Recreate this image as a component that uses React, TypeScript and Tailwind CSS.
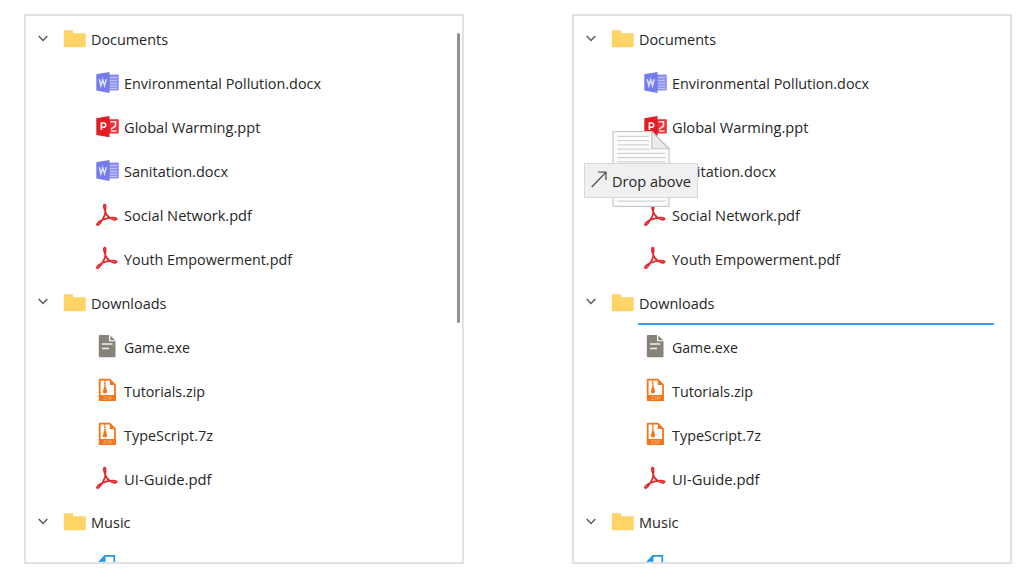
import type { ReactNode } from "react";

type Kind = "folder" | "word" | "ppt" | "pdf" | "exe" | "zip" | "music";
type Item = { label: string; kind: Kind; width: number };

const items: Item[] = [
  { label: "Documents", kind: "folder", width: 77 },
  { label: "Environmental Pollution.docx", kind: "word", width: 197 },
  { label: "Global Warming.ppt", kind: "ppt", width: 136.5 },
  { label: "Sanitation.docx", kind: "word", width: 104 },
  { label: "Social Network.pdf", kind: "pdf", width: 128 },
  { label: "Youth Empowerment.pdf", kind: "pdf", width: 168 },
  { label: "Downloads", kind: "folder", width: 75.5 },
  { label: "Game.exe", kind: "exe", width: 66 },
  { label: "Tutorials.zip", kind: "zip", width: 81 },
  { label: "TypeScript.7z", kind: "zip", width: 89 },
  { label: "UI-Guide.pdf", kind: "pdf", width: 87.5 },
  { label: "Music", kind: "folder", width: 39.5 },
  { label: "", kind: "music", width: 0 },
];

const glyphs: Record<Kind, ReactNode> = {
  folder: <path d="M.8 3.2q0-1 1-1h7.4q1 0 1 1v2h11.6q1 0 1 1v12q0 1-1 1h-20q-1 0-1-1z" fill="#ffd466" />,
  word: (
    <>
      <path d="M12 2.6h10q.8 0 .8.8v14.2q0 .8-.8.8H12z" fill="#8b92f0" />
      <path d="M14 5.6h7M14 8.4h7M14 11.2h7M14 14h7M14 16.4h7" stroke="#c5c9fa" strokeWidth="1" />
      <path d="M.3 2.3 13.5 0v21L.3 18.6z" fill="#747bea" />
      <path d="m3.3 7.2 1.6 6.4 1.8-5.8 1.8 5.8 1.7-6.4" fill="none" stroke="#e0e3ff" strokeWidth="1.5" />
    </>
  ),
  ppt: (
    <>
      <path d="M12 3.2h10q.8 0 .8.8v12.8q0 .8-.8.8H12z" fill="#ed3035" />
      <path d="M14.500 5.800h5v4.200l-4.500 3.200M15 15h5.500" fill="none" stroke="#ffe4e4" strokeWidth="1.6" />
      <path d="M.3 2.3 13.5 0v21.3L.3 18.9z" fill="#e31b23" />
      <path d="M5.4 14V7h2.2a2.1 2.1 0 0 1 0 4.3H5.4" fill="none" stroke="#fff" strokeWidth="1.6" />
    </>
  ),
  pdf: (
    <path
      d="M8.7.5C7.1.7 7.8 4 9.1 7.2c.5 1.3.2 2.2-.6 4.2-.8 1.8-1.5 3.4-2.3 4.6C3.6 17.4.6 19.5.9 20.7c1.1 1.5 3.2-1.1 5.3-4.7 2.7-1.2 5.1-1.9 7.7-2.1 2.5 1.6 5.9 2.8 6.7 1.3.6-1.7-3.7-1.6-6.7-1.3-2.4-1.6-4.1-3.7-4.8-6.7C9.8 3.9 10.1.5 8.7.5Z"
      fill="none" stroke="#e3292d" strokeWidth="1.7" strokeLinejoin="round"
    />
  ),
  exe: (
    <>
      <path d="M4 0h9v6.2h6.5V21q0 1.2-1.2 1.2H4q-1.2 0-1.2-1.2V1.2Q2.800 0 4 0Z" fill="#87837a" />
      <path d="m14.3.4 4.9 4.8h-4.9z" fill="#87837a" />
      <path d="M6 9h10.500M6 13.500h7" stroke="#f2f1ef" strokeWidth="1.4" />
    </>
  ),
  zip: (
    <>
      <path d="M3.700.7h10L19 6v15.200H3.700z" fill="#fff" stroke="#f77519" strokeWidth="1.800" strokeLinejoin="round" />
      <path d="M13.800.5V6h5.500z" fill="#f77519" />
      <path d="M8.800 1.200v7" stroke="#f77519" strokeWidth="1.700" strokeDasharray="1.5 .7" />
      <path d="M8.100 7.500h1.800l1.300 5.200q0 1.700-2.200 1.700t-2.200-1.700z" fill="#f77519" />
      <path d="M3 16h16.800v5.900H3z" fill="#f77519" />
      <path d="M7.300 17.500h2.700l-2.700 3H10M11.800 17.200v3.700M13.700 21v-3.500h1.500q1.500 1.100 0 2h-1.500" fill="none" stroke="#ffb27c" strokeWidth=".8" />
    </>
  ),
  music: (
    <>
      <path d="M9 .9h9.300v20.500H3.700V6.500z" fill="#fff" stroke="#2196ed" strokeWidth="1.700" />
      <path d="M9.500.3v6.500H3z" fill="#2196ed" />
    </>
  ),
};

function Row({ item }: { item: Item }) {
  const folder = item.kind === "folder";
  return (
    <div className={`flex h-[43.92px] shrink-0 items-center ${folder ? "pl-[12px]" : "pl-[70px]"}`}>
      {folder && (
        <svg viewBox="0 0 10 7" className="mr-[15px] mb-[2px] h-[7px] w-[10px] shrink-0">
          <path d="m.7.9 4.3 4.500L9.300.9" fill="none" stroke="#5c5c5c" strokeWidth="1.500" />
        </svg>
      )}
      <svg viewBox="0 0 24 24" className={`mr-1 h-6 w-6 shrink-0 overflow-visible ${folder ? "mt-[2px]" : "mt-[1px]"}`}>
        {glyphs[item.kind]}
      </svg>
      {item.label && <Label text={item.label} width={item.width} />}
    </div>
  );
}

function Label({ text, width }: { text: string; width: number }) {
  return (
    <svg className="h-6 shrink-0 overflow-visible" style={{ width }}>
      <text x="0" y="17.500" textLength={width} lengthAdjust="spacingAndGlyphs" fill="#262626" fontSize="15">
        {text}
      </text>
    </svg>
  );
}

function DragPreview() {
  return (
    <div className="absolute top-[115px] left-[10px] h-[78px] w-[116px]">
      <svg viewBox="0 0 58 77" className="absolute top-0 left-[28px] h-[76px] w-[58px]">
        <path d="M.7.700H40L57.300 18v58.300H.7z" fill="#fcfcfc" stroke="#c7cbcb" strokeWidth="1.300" />
        <path d="M5 5.500h32M5 9.800h32M5 14.100h32M5 18.400h33M5 22.700h49M5 27h49M5 31.300h49M5 66h49M5 71h49" stroke="#d1d3d3" strokeWidth="1.200" />
        <path d="M40 .7V18h17.300z" fill="#ececec" stroke="#c1c4c4" strokeWidth="1.200" />
      </svg>
      <div className="absolute top-[32px] left-0 flex h-[35px] w-[114px] items-center border border-[#d7d7d7] bg-[#f0f0f0] pl-[6px]">
        <svg viewBox="0 0 16 17" className="mb-[3px] h-[17px] w-[16px] shrink-0">
          <path d="M.7 16 15 1.200M7.200 1.200H15V9" fill="none" stroke="#555" strokeWidth="1.300" />
        </svg>
        <div className="ml-[5px] flex">
          <Label text="Drop above" width={79} />
        </div>
      </div>
    </div>
  );
}

function Tree({ children }: { children: ReactNode }) {
  return (
    <div className="relative h-[550px] w-[440px] shrink-0 overflow-hidden border-2 border-[#e2e2e2] bg-white pt-[1.500px]">
      {items.map((item, i) => <Row key={i} item={item} />)}
      {children}
    </div>
  );
}

export default function App() {
  return (
    <main className="flex h-[578px] w-[1036px] gap-[108px] overflow-hidden bg-white pt-[14px] pl-[24px] font-['Open_Sans','Noto_Sans',sans-serif]">
      <Tree>
        <div className="absolute top-[17px] right-[2px] h-[290px] w-[3px] rounded-full bg-[#919191]" />
      </Tree>
      <Tree>
        <div className="absolute top-[307px] left-[64px] h-[2px] w-[356px] bg-[#369bea]" />
        <DragPreview />
      </Tree>
    </main>
  );
}
